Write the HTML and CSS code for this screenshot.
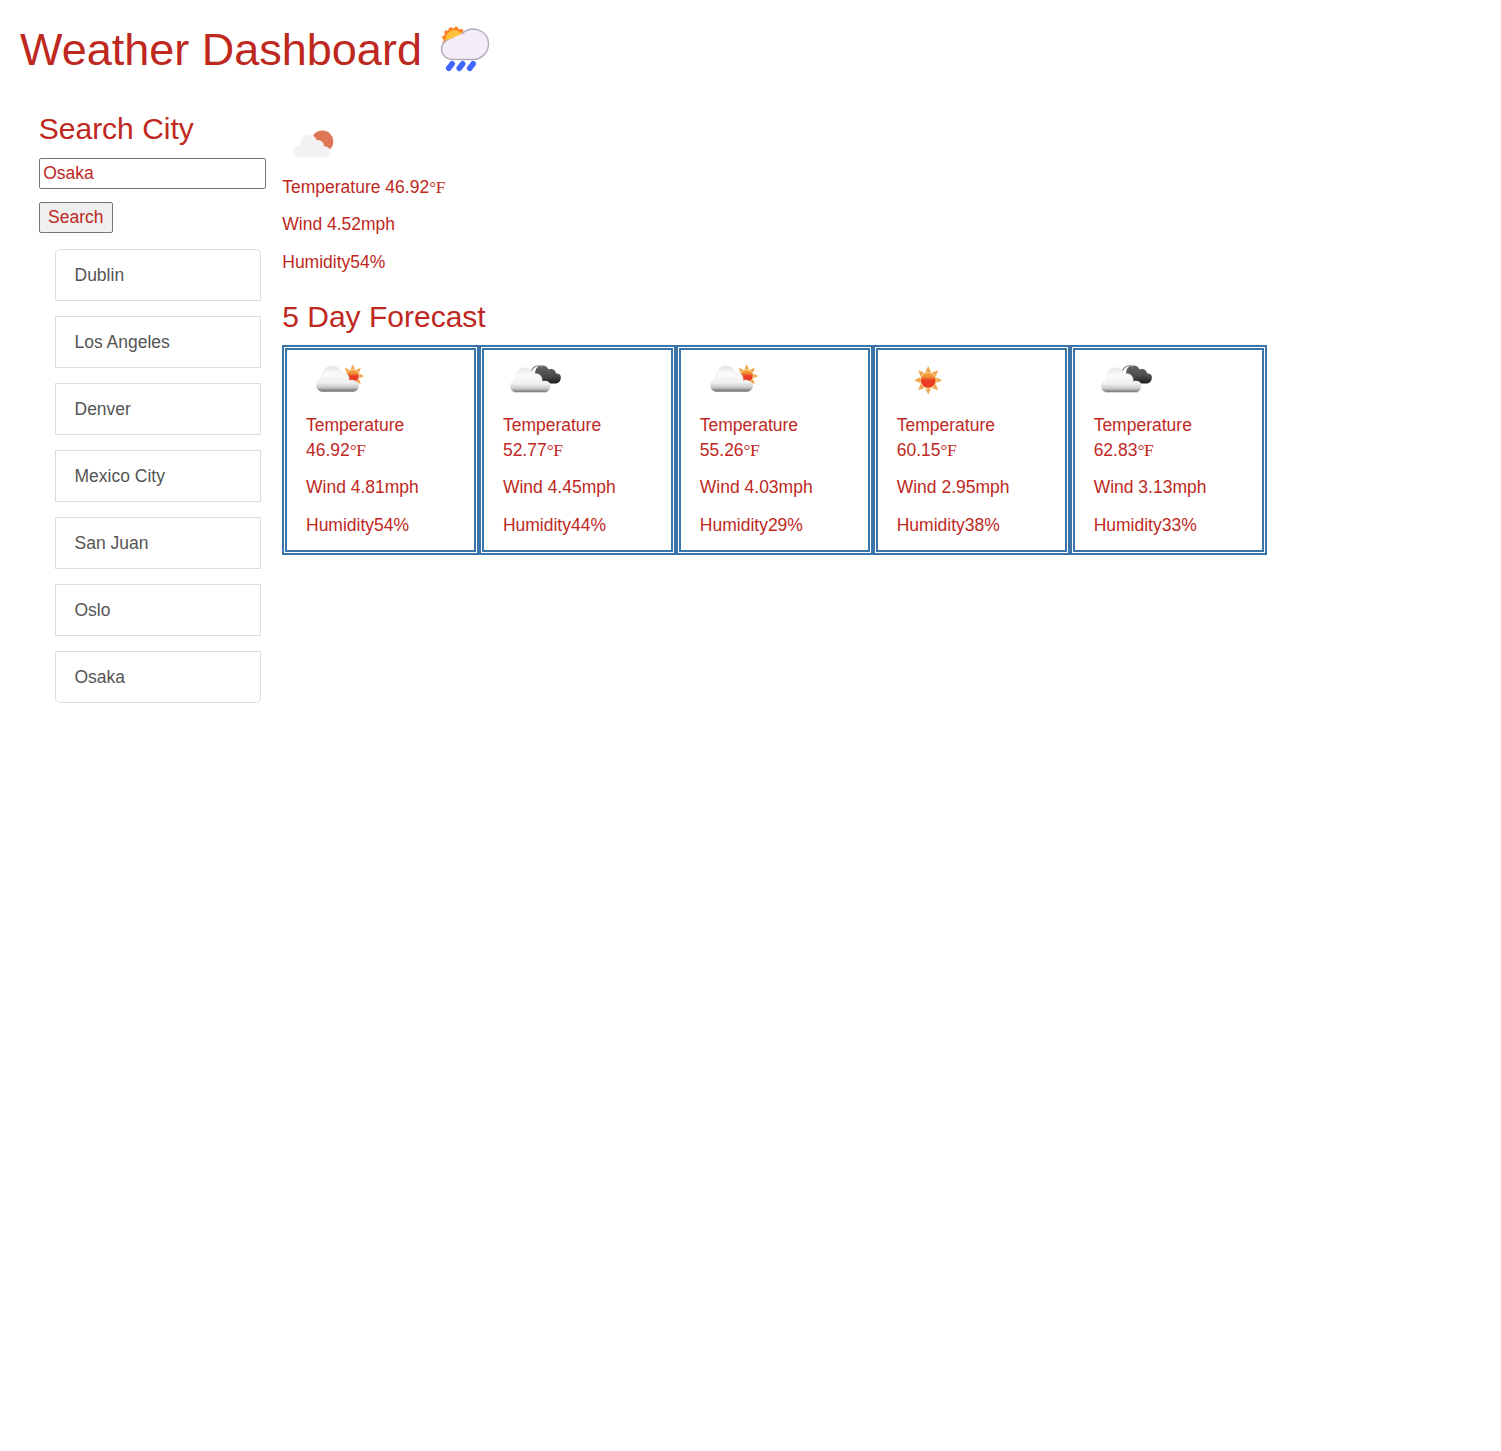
FILE: index.html
```html
<!DOCTYPE html>
<html lang="en">
<head>
<meta charset="utf-8">
<title>Weather Dashboard</title>
<link rel="stylesheet" href="styles.css">
</head>
<body>
<svg class="defs" width="0" height="0" aria-hidden="true">
  <defs>
    <linearGradient id="cloud" x1="0" y1="0" x2="0" y2="1">
      <stop offset="0" stop-color="#e4e4e4"/><stop offset=".3" stop-color="#fbfbfb"/><stop offset=".65" stop-color="#f0f0f0"/><stop offset=".84" stop-color="#c8c8c8"/><stop offset="1" stop-color="#6a6a6a"/>
    </linearGradient>
    <linearGradient id="edge" x1="0" y1="0" x2="0" y2="1">
      <stop offset="0" stop-color="#ddd"/><stop offset=".7" stop-color="#ddd"/><stop offset="1" stop-color="#777"/>
    </linearGradient>
    <linearGradient id="dark" x1="0" y1="0" x2="0" y2="1">
      <stop offset="0" stop-color="#666"/><stop offset=".6" stop-color="#4a4a4a"/><stop offset="1" stop-color="#1c1c1c"/>
    </linearGradient>
    <linearGradient id="disc" x1="0" y1="0" x2="0" y2="1">
      <stop offset="0" stop-color="#f5b03c"/><stop offset=".3" stop-color="#ef8a35"/><stop offset=".5" stop-color="#ea3d25"/><stop offset="1" stop-color="#ee3a20"/>
    </linearGradient>
    <symbol id="sun" viewBox="0 0 30 30">
      <path fill="#f0a850" d="M15 .8l2.800 6h-5.600zM15 29.200l2.800-6h-5.600zM.8 15l6-2.800v5.600zM29.200 15l-6-2.800v5.600zM5 5l6.200 2.300-3.900 3.900zM25 5l-2.300 6.200-3.900-3.900zM5 25l2.300-6.200 3.900 3.900zM25 25l-6.200-2.300 3.900-3.900z"/>
      <circle cx="15" cy="15" r="7.700" fill="url(#disc)" stroke="#efb24d" stroke-width=".7"/>
    </symbol>
    <symbol id="partly" viewBox="0 0 62.500 62.500">
      <use href="#sun" x="34.500" y="13.700" width="24.500" height="24.500"/>
      <path fill="url(#cloud)" stroke="url(#edge)" stroke-width=".5" d="M17 41.500C9 41.500 8.500 30.500 16 28.500C16 13.500 32 12.500 35.500 23.500C40 21.500 44 25.500 43 30.500C48 29 52 32 52.500 35C53 39 50 41.500 46.500 41.500Z"/>
    </symbol>
    <symbol id="broken" viewBox="0 0 62.500 62.500">
      <path fill="url(#dark)" d="M33 30C31 23 32 16 38.500 15.500C42 15 45 17 45.500 19.500C49 18 53 20 53 23.500C56 23 58.500 25.500 57.800 28C57.500 32 55 33.500 52 33.500H40Z"/>
      <path fill="none" stroke="#888" stroke-width="1.200" d="M28 22.500C29 17 35 14 39.500 17"/>
      <path fill="url(#cloud)" stroke="#f2f2f2" stroke-width=".6" d="M13.500 42.500C5.500 42.500 5 32 12 30C11.500 15.500 27 14 30.500 24.500C35 22 40 26 39 31.500C44 30 49 33 47 37.500C46.500 41 44 42.500 41.500 42.500Z"/>
    </symbol>
    <symbol id="clear" viewBox="0 0 62.500 62.500">
      <use href="#sun" x="16.200" y="15.200" width="30" height="30"/>
    </symbol>
  </defs>
</svg>

<header class="header">
  <h1>Weather Dashboard</h1>
  <svg class="logo" viewBox="0 0 56 56">
    <circle cx="18.500" cy="17" r="10" fill="#ffc23d" stroke="#ff8125" stroke-width="2"/>
    <circle cx="18.500" cy="17" r="11.300" fill="none" stroke="#ff8125" stroke-width="2.200" stroke-dasharray="3 2.916"/>
    <path fill="#f3edf8" stroke="#b4aabb" stroke-width="1.400" d="M17.500 37.500C2.500 37.500 2 19.500 13.500 18C18 15 21 17 25 13C32 2.500 52.500 6 52.500 22C52.500 31 45 37.500 37 37.500Z"/>
    <path fill="#f3edf8" d="M9 21.500C11 17 15 17.500 18 15.500C20 13.500 24 14 25.500 11.500L34 24L15 30Z"/>
    <g stroke="#4264ff" stroke-width="5.600" stroke-linecap="round"><path d="M16.200 41.700l-3.500 4.600M26.700 41.700l-3.500 4.600M37.200 41.700l-3.500 4.600"/></g>
  </svg>
</header>

<main class="layout">
  <aside class="sidebar">
    <h3>Search City</h3>
    <input class="city" type="text" value="Osaka">
    <button class="search" type="button">Search</button>
    <ul class="history">
      <li>Dublin</li><li>Los Angeles</li><li>Denver</li><li>Mexico City</li><li>San Juan</li><li>Oslo</li><li>Osaka</li>
    </ul>
  </aside>
  <section class="weather">
    <svg class="icon" viewBox="0 0 62.500 62.500">
      <circle cx="40.300" cy="29.600" r="11" fill="#df7655"/>
      <path fill="#f2f2f2" stroke="#fff" stroke-width=".5" d="M17 45.300C8.500 45.300 8.500 34 18 32.500C17.500 21 31 18.500 34.500 28.500C38.500 27.500 42 31 42 35C45.500 34 49 37.500 48 40C47.500 43.500 45 45.300 42 45.300Z"/>
    </svg>
    <p>Temperature 46.92<span class="unit">°F</span></p>
    <p>Wind 4.52mph</p>
    <p>Humidity54%</p>
    <h3 class="forecast-title">5 Day Forecast</h3>
    <div class="forecast">
      <article class="day"><svg class="icon"><use href="#partly"/></svg><p>Temperature 46.92<span class="unit">°F</span></p><p>Wind 4.81mph</p><p>Humidity54%</p></article>
      <article class="day"><svg class="icon"><use href="#broken"/></svg><p>Temperature 52.77<span class="unit">°F</span></p><p>Wind 4.45mph</p><p>Humidity44%</p></article>
      <article class="day"><svg class="icon"><use href="#partly"/></svg><p>Temperature 55.26<span class="unit">°F</span></p><p>Wind 4.03mph</p><p>Humidity29%</p></article>
      <article class="day"><svg class="icon"><use href="#clear"/></svg><p>Temperature 60.15<span class="unit">°F</span></p><p>Wind 2.95mph</p><p>Humidity38%</p></article>
      <article class="day"><svg class="icon"><use href="#broken"/></svg><p>Temperature 62.83<span class="unit">°F</span></p><p>Wind 3.13mph</p><p>Humidity33%</p></article>
    </div>
  </section>
</main>
</body>
</html>
```
FILE: styles.css
```css
* { box-sizing: border-box; }
body {
  margin: 0;
  background: #fff;
  color: #be281e;
  font: 17.5px/25px "Liberation Sans", Arial, sans-serif;
}
h1, h3, p { margin: 0; font-weight: 400; }
h1 { font-size: 45px; line-height: 49.5px; }
h3 { font-size: 30px; line-height: 33px; margin-bottom: 12.5px; }
p { margin-bottom: 12.5px; }
.defs { display: block; }
.header {
  display: flex;
  align-items: flex-start;
  gap: 14px;
  height: 112px;
  padding: 25px 0 0 20px;
}
.logo { width: 56px; height: 56px; margin-top: -3px; }
.layout { display: flex; padding-left: 38.75px; }
.sidebar { width: 243.5px; }
.city, .search {
  display: block;
  height: 31px;
  border: 1px solid #767676;
  border-radius: 2px;
  color: inherit;
  font: inherit;
}
.city { width: 227px; padding: 0 3.5px; background: #fff; }
.search { width: 74px; margin-top: 13px; padding: 0; background: #efefef; }
.history {
  display: flex;
  flex-direction: column;
  gap: 15px;
  width: 206px;
  margin: 16px 0 0 16.25px;
  padding: 0;
  list-style: none;
  color: #555;
}
.history li { height: 52px; padding: 13px 18.5px 12px; border: 1px solid #ddd; }
.history li:first-child { border-radius: 5px 5px 0 0; }
.history li:last-child { border-radius: 0 0 5px 5px; }
.icon { display: block; width: 62.5px; height: 62.5px; }
.unit { font-family: "Liberation Serif", "Times New Roman", serif; letter-spacing: -.5px; }
.forecast-title { margin-top: 25px; }
.forecast { display: flex; width: 984.5px; }
.day { flex: 1 1 0; border: 5px double #3973a8; padding: 0 18.75px; }
```
